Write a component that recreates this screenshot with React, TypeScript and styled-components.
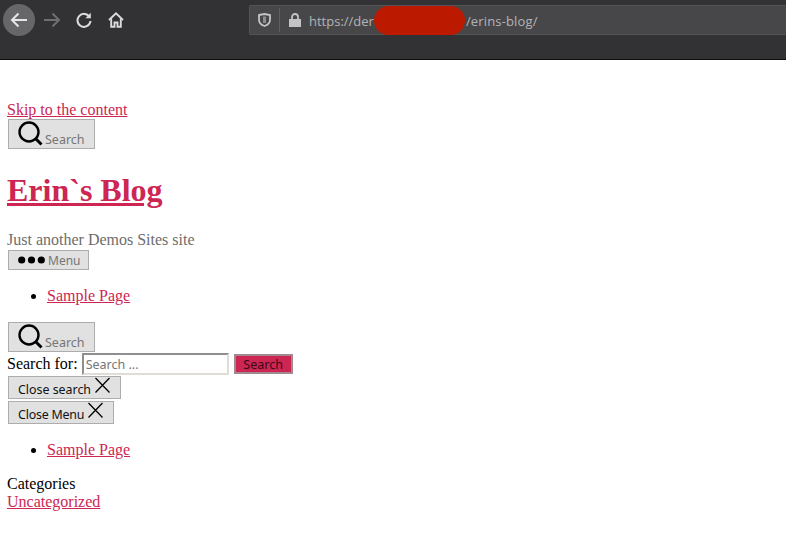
import React from "react";
import styled, { createGlobalStyle } from "styled-components";

const GlobalStyle = createGlobalStyle`
  html, body {
    margin: 0;
    padding: 0;
    background: #ffffff;
    color: #000000;
    font-family: "Liberation Serif", "Times New Roman", serif;
    font-size: 16px;
    overflow: hidden;
  }
`;

const Toolbar = styled.header`
  display: flex;
  align-items: flex-start;
  height: 59px;
  background: #323234;
  border-bottom: 1px solid #0c0c0d;
  box-sizing: content-box;
`;

const NavGroup = styled.nav`
  display: flex;
  align-items: center;
  width: 249px;
  height: 40px;
  padding-left: 3px;
  box-sizing: border-box;
`;

const NavButton = styled.span<{ $active?: boolean; $w?: number }>`
  display: flex;
  align-items: center;
  justify-content: center;
  flex: none;
  width: ${(p) => p.$w ?? 32}px;
  height: 32px;
  border-radius: 50%;
  background: ${(p) => (p.$active ? "#67676a" : "transparent")};
`;

const UrlBar = styled.div`
  display: flex;
  align-items: center;
  flex: 1;
  height: 30px;
  margin-top: 5px;
  background: #47474a;
  border: 1px solid #545457;
  border-right: none;
  border-radius: 2px 0 0 2px;
  box-sizing: border-box;
  font-family: "Open Sans", "Noto Sans", sans-serif;
  font-size: 13px;
  color: #b4b4b6;
`;

const ShieldSlot = styled.span`
  display: flex;
  align-items: center;
  justify-content: center;
  width: 29px;
  height: 24px;
  border-right: 1px solid #5f5f62;
`;

const LockSlot = styled.span`
  display: flex;
  align-items: center;
  justify-content: center;
  width: 29px;
`;

const UrlText = styled.span<{ $spacing: number }>`
  margin-top: 2px;
  letter-spacing: ${(p) => p.$spacing}px;
`;

const Redaction = styled.span`
  width: 91px;
  height: 29px;
  margin-right: 1px;
  border-radius: 15px;
  background: #bb1a00;
`;

const Page = styled.main`
  padding: 42px 7px 0;
`;

const Link = styled.a`
  color: #cd2653;
  text-decoration: underline;
`;

const SkipLine = styled.div`
  height: 17px;
  line-height: 16px;
`;

const Line = styled.div`
  display: block;
`;

const PageButton = styled.button<{ $dark?: boolean }>`
  display: inline-flex;
  align-items: flex-end;
  height: ${(p) => (p.$dark ? "23px" : "30px")};
  margin: 0 0 0 1px;
  padding: 0 9px;
  background: #e1e1e1;
  border: 1px solid #adadad;
  border-radius: 0;
  box-sizing: border-box;
  font-family: "Noto Sans", Tahoma, sans-serif;
  font-size: 12.5px;
  color: ${(p) => (p.$dark ? "#111111" : "#767676")};
  vertical-align: top;
`;

const MenuButton = styled(PageButton)`
  align-items: center;
  gap: 3px;
  height: 20px;
  font-size: 12px;
  padding-right: 8px;
`;

const ButtonLabel = styled.span<{ $drop?: number; $gap?: number; $tight?: boolean }>`
  line-height: 14px;
  margin-bottom: ${(p) => p.$drop ?? 1}px;
  margin-left: ${(p) => p.$gap ?? 0}px;
  letter-spacing: ${(p) => (p.$tight ? "-0.2px" : "normal")};
`;

const Title = styled.h1`
  margin: 23px 0 22px;
  font-size: 32px;
  line-height: 37px;
  font-weight: bold;
`;

const Tagline = styled.div`
  color: #6d6d6d;
  line-height: 18px;
  margin-bottom: 1px;
`;

const NavList = styled.ul<{ $after: number }>`
  margin: 17px 0 ${(p) => p.$after}px;
  padding-left: 40px;
  line-height: 18px;
`;

const SearchForm = styled.form`
  display: flex;
  align-items: center;
  height: 22px;
  margin-top: 1px;
  line-height: 18px;
`;

const SearchInput = styled.input`
  width: 147px;
  height: 22px;
  margin: 0 5px 0 4px;
  padding: 1px 2px;
  box-sizing: border-box;
  border: 2px solid;
  border-color: #8f8f8f #e0ddd6 #e0ddd6 #8f8f8f;
  background: #ffffff;
  font-family: "Noto Sans", Tahoma, sans-serif;
  font-size: 12.5px;
  &::placeholder {
    color: #767676;
    opacity: 1;
  }
`;

const SubmitButton = styled.button`
  width: 59px;
  height: 20px;
  margin: 0;
  padding: 0;
  background: #cd2653;
  border: 2px solid #a08a90;
  box-sizing: border-box;
  font-family: "Noto Sans", Tahoma, sans-serif;
  font-size: 12.5px;
  color: #3a0a18;
`;

const CloseRow = styled.div`
  display: flex;
  height: 23px;
  margin-top: 1px;
  & + & {
    margin-top: 2px;
  }
`;

const CloseButton = styled(PageButton)`
  gap: 3px;
  font-size: 12.4px;
`;

const Categories = styled.div`
  line-height: 18px;
`;

const SearchGlyph = () => (
  <svg width="26" height="26" viewBox="0 0 26 26" fill="none" stroke="#000" style={{ marginBottom: 2 }}>
    <circle cx="11" cy="12" r="9.5" strokeWidth="2.4" />
    <path d="M18 19 L23.5 24.5" strokeWidth="3" />
  </svg>
);

const CloseGlyph = () => (
  <svg width="17" height="17" viewBox="0 0 17 17" fill="none" stroke="#000" strokeWidth="1.3" style={{ marginBottom: 4 }}>
    <path d="M1.5 1 L15.5 15.5 M15.5 1 L1.5 15.5" />
  </svg>
);

const App: React.FC = () => {
  return (
    <>
      <GlobalStyle />
      <Toolbar>
        <NavGroup>
          <NavButton $active>
            <svg width="18" height="16" viewBox="0 0 18 16" fill="none" stroke="#e6e6e8" strokeWidth="2">
              <path d="M17 8 H2 M8.5 1.5 L2 8 L8.5 14.5" />
            </svg>
          </NavButton>
          <NavButton $w={33}>
            <svg width="18" height="16" viewBox="0 0 18 16" fill="none" stroke="#6f6f72" strokeWidth="2">
              <path d="M1 8 H16 M9.5 1.5 L16 8 L9.5 14.5" />
            </svg>
          </NavButton>
          <NavButton>
            <svg width="16" height="16" viewBox="0 0 16 16" fill="none" stroke="#dcdcde" strokeWidth="2">
              <path d="M13.6 5 A6.5 6.5 0 1 0 14.5 9" />
              <path d="M14.8 0.8 V6.2 H9.4 Z" fill="#dcdcde" stroke="none" />
            </svg>
          </NavButton>
          <NavButton>
            <svg width="16" height="16" viewBox="0 0 16 16" fill="none" stroke="#dcdcde" strokeWidth="1.9">
              <path d="M1 8 L8 1.4 L15 8" />
              <path d="M3.2 7 V14.8 H6.5 V10.5 H9.5 V14.8 H12.8 V7" />
            </svg>
          </NavButton>
        </NavGroup>
        <UrlBar>
          <ShieldSlot>
            <svg width="13" height="14" viewBox="0 0 13 14" fill="none" stroke="#c4c4c6" strokeWidth="1.8">
              <path d="M1 2 L6.5 1 L12 2 V7 C12 10 9.5 12 6.5 13 C3.5 12 1 10 1 7 Z" />
              <path d="M6.5 3.5 V10" strokeWidth="3" strokeOpacity="0.55" />
            </svg>
          </ShieldSlot>
          <LockSlot>
            <svg width="12" height="14" viewBox="0 0 12 14" fill="#c4c4c6">
              <path d="M0 6 H12 V14 H0 Z" />
              <path d="M3 6 V4 A3 3 0 0 1 9 4 V6" fill="none" stroke="#c4c4c6" strokeWidth="1.8" />
            </svg>
          </LockSlot>
          <UrlText $spacing={0}>https://der</UrlText>
          <Redaction />
          <UrlText $spacing={0.15}>/erins-blog/</UrlText>
        </UrlBar>
      </Toolbar>
      <Page>
        <SkipLine>
          <Link href="#content">Skip to the content</Link>
        </SkipLine>
        <Line>
          <PageButton>
            <SearchGlyph />
            <ButtonLabel $gap={1}>Search</ButtonLabel>
          </PageButton>
        </Line>
        <Title>
          <Link href="#home">Erin`s Blog</Link>
        </Title>
        <Tagline>Just another Demos Sites site</Tagline>
        <Line>
          <MenuButton>
            <svg width="27" height="8" viewBox="0 0 27 8" fill="#000">
              <circle cx="3.7" cy="4" r="3.6" />
              <circle cx="13.5" cy="4" r="3.6" />
              <circle cx="23.3" cy="4" r="3.6" />
            </svg>
            <span>Menu</span>
          </MenuButton>
        </Line>
        <NavList $after={17}>
          <li>
            <Link href="#sample">Sample Page</Link>
          </li>
        </NavList>
        <Line>
          <PageButton>
            <SearchGlyph />
            <ButtonLabel $gap={1}>Search</ButtonLabel>
          </PageButton>
        </Line>
        <SearchForm>
          <label>Search for:</label>
          <SearchInput placeholder="Search ..." readOnly />
          <SubmitButton type="button">Search</SubmitButton>
        </SearchForm>
        <CloseRow>
          <CloseButton $dark>
            <ButtonLabel $drop={1}>Close search</ButtonLabel>
            <CloseGlyph />
          </CloseButton>
        </CloseRow>
        <CloseRow>
          <CloseButton $dark>
            <ButtonLabel $drop={1} $tight>Close Menu</ButtonLabel>
            <CloseGlyph />
          </CloseButton>
        </CloseRow>
        <NavList $after={16}>
          <li>
            <Link href="#sample">Sample Page</Link>
          </li>
        </NavList>
        <Categories>Categories</Categories>
        <Categories>
          <Link href="#uncategorized">Uncategorized</Link>
        </Categories>
      </Page>
    </>
  );
};

export default App;
